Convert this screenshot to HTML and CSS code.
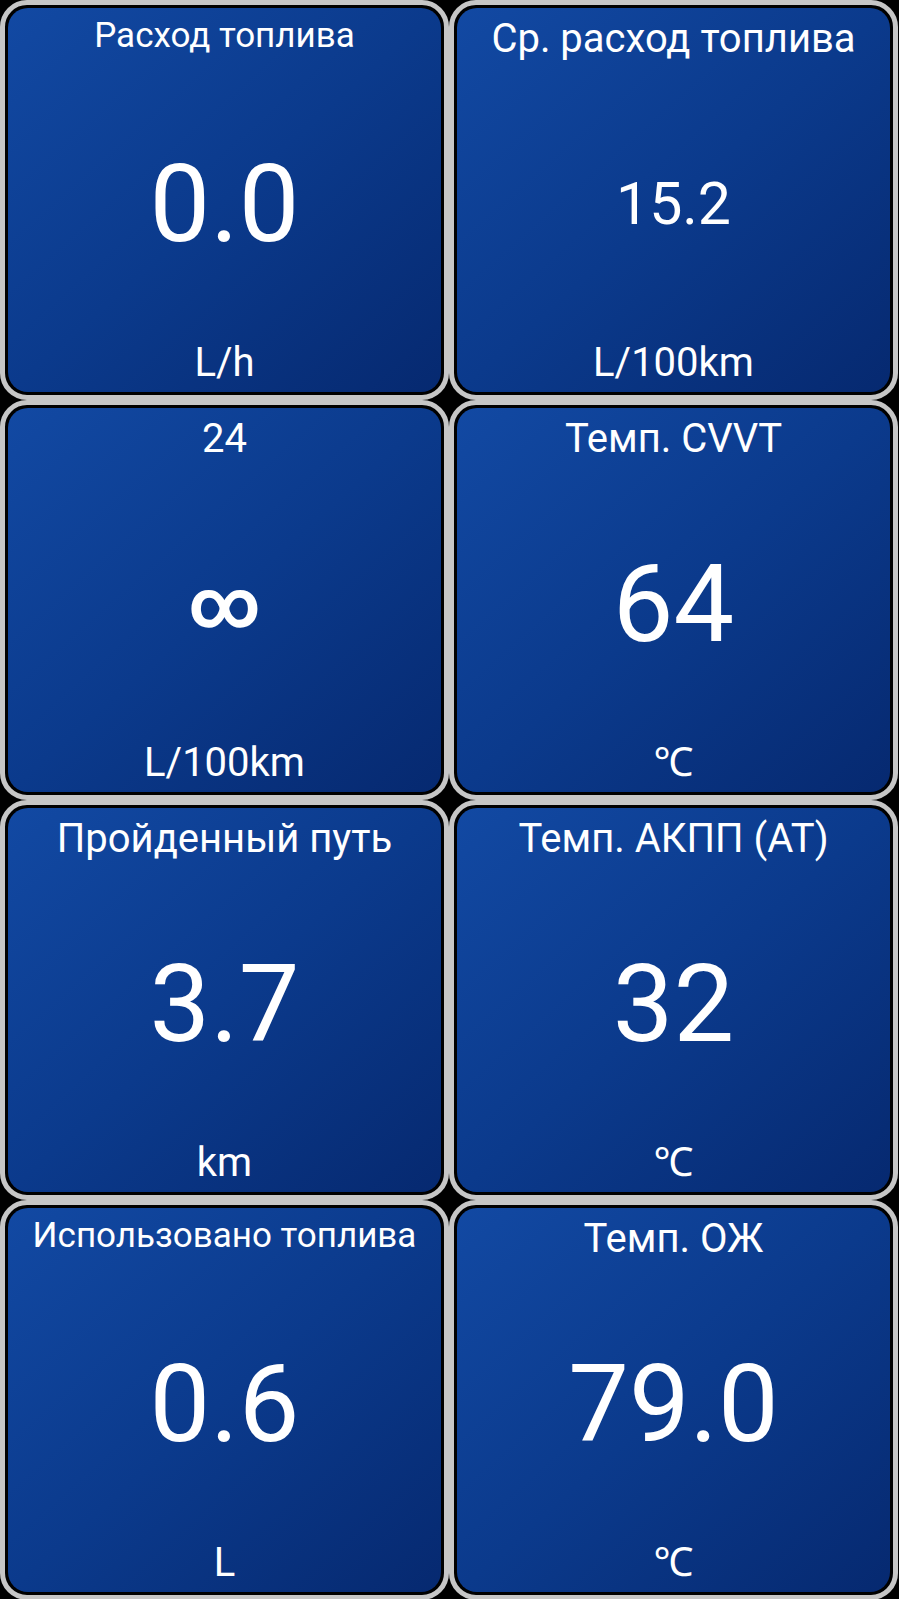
FILE: index.html
```html
<!DOCTYPE html>
<html lang="ru">
<head>
<meta charset="utf-8">
<title>Приборы</title>
<link rel="stylesheet" href="styles.css">
</head>
<body>
<main class="grid">
  <section class="card"><div class="panel">
    <div class="title title-sm">Расход топлива</div>
    <div class="value">0.0</div>
    <div class="unit">L/h</div>
  </div></section>
  <section class="card"><div class="panel">
    <div class="title">Ср. расход топлива</div>
    <div class="value value-small">15.2</div>
    <div class="unit">L/100km</div>
  </div></section>
  <section class="card"><div class="panel">
    <div class="title">24</div>
    <div class="value value-inf">∞</div>
    <div class="unit">L/100km</div>
  </div></section>
  <section class="card"><div class="panel">
    <div class="title">Темп. CVVT</div>
    <div class="value">64</div>
    <div class="unit">℃</div>
  </div></section>
  <section class="card"><div class="panel">
    <div class="title">Пройденный путь</div>
    <div class="value">3.7</div>
    <div class="unit">km</div>
  </div></section>
  <section class="card"><div class="panel">
    <div class="title">Темп. АКПП (АТ)</div>
    <div class="value">32</div>
    <div class="unit">℃</div>
  </div></section>
  <section class="card"><div class="panel">
    <div class="title title-sm">Использовано топлива</div>
    <div class="value">0.6</div>
    <div class="unit">L</div>
  </div></section>
  <section class="card"><div class="panel">
    <div class="title">Темп. ОЖ</div>
    <div class="value">79.0</div>
    <div class="unit">℃</div>
  </div></section>
</main>
</body>
</html>
```
FILE: styles.css
```css
html, body {
  margin: 0;
  padding: 0;
  background: #000;
}
body {
  font-family: Roboto, "Noto Sans", "DejaVu Sans", sans-serif;
  color: #fff;
}
.grid {
  display: grid;
  grid-template-columns: 449px 449px;
  grid-auto-rows: 400px;
  width: 898px;
}
.card {
  box-sizing: border-box;
  border: 5px solid #c6c6c6;
  border-radius: 27px;
  padding: 3px;
  background: #000;
}
.panel {
  box-sizing: border-box;
  height: 100%;
  border-radius: 20px;
  background: linear-gradient(to bottom right, #1249a3 0%, #0b3a8c 50%, #062970 100%);
  display: grid;
  grid-template-rows: auto 1fr auto;
  text-align: center;
  padding: 8px 6px 6px;
}
.title {
  font-size: 40px;
  line-height: 46px;
  white-space: nowrap;
}
.title-sm {
  font-size: 35px;
  line-height: 40px;
  padding-bottom: 6px;
}
.value {
  font-size: 108px;
  line-height: 1;
  display: flex;
  align-items: center;
  justify-content: center;
  padding-top: 5px;
}
.value-small {
  font-size: 59px;
}
.value-inf {
  font-size: 69px;
  font-weight: 700;
}
.unit {
  font-size: 40px;
  line-height: 46px;
}
```
